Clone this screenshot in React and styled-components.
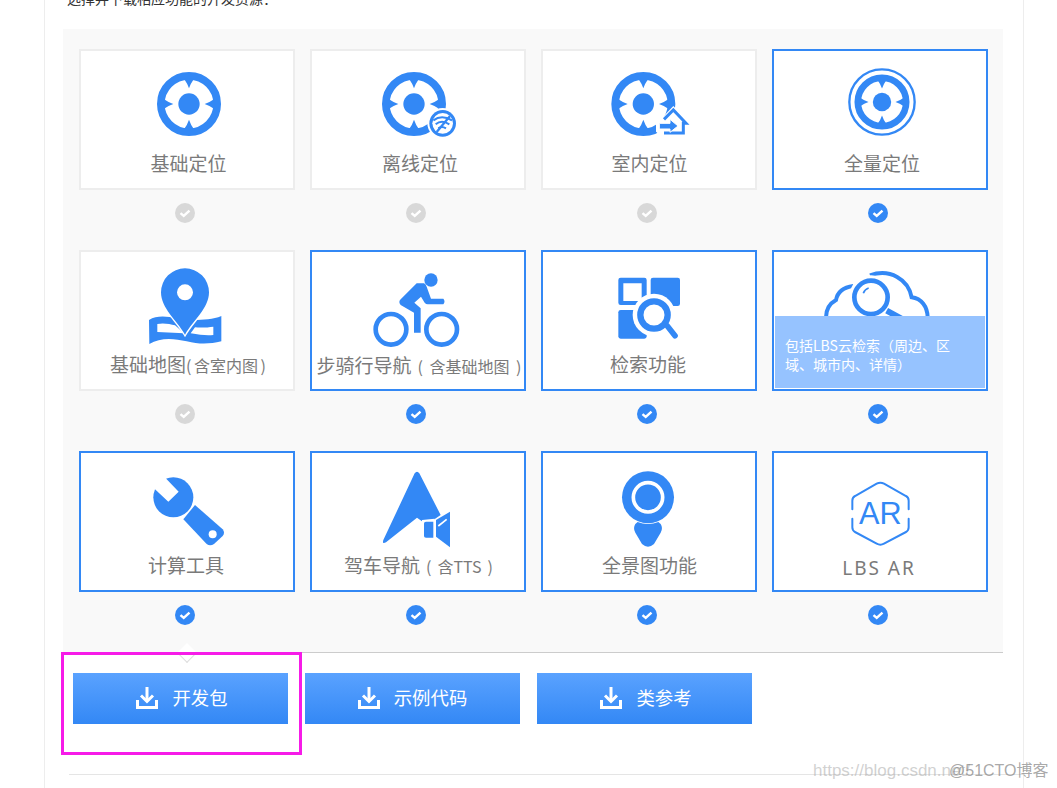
import React from "react";
import styled, { createGlobalStyle } from "styled-components";

const BLUE = "#3388f5";
const CJK = `"Noto Sans CJK SC", "Noto Sans", sans-serif`;

const Global = createGlobalStyle`
  html, body { margin: 0; padding: 0; background: #fff; }
  body { font-family: ${CJK}; overflow: hidden; }
`;

const Shell = styled.div`
  position: relative;
  display: flow-root;
  box-sizing: border-box;
  width: 980px;
  height: 788px;
  margin-left: 44px;
  border-left: 1px solid #ededed;
  border-right: 1px solid #ededed;
`;
const Intro = styled.p`
  margin: -9px 0 0 22px;
  height: 38px;
  font-size: 14px;
  line-height: 14px;
  color: #333;
`;
const Panel = styled.section`
  position: relative;
  box-sizing: border-box;
  width: 940px;
  margin-left: 18px;
  padding: 20px 0 27px 16px;
  background: #f9f9f9;
  border-bottom: 1px solid #ccc;
`;
const Grid = styled.div`
  display: grid;
  grid-template-columns: repeat(4, 216px);
  column-gap: 15px;
  row-gap: 27px;
`;
const Cell = styled.div`
  display: flex;
  flex-direction: column;
  align-items: center;
`;
const Card = styled.div`
  position: relative;
  box-sizing: border-box;
  width: 216px;
  height: 141px;
  background: #fff;
  border: 2px solid ${(p) => (p.$on ? BLUE : "#ededed")};
  overflow: hidden;
`;
const Canvas = styled.svg`
  display: block;
  width: 212px;
  height: 100px;
`;
const Label = styled.div`
  margin-left: ${(p) => (p.$dx || 0) * 2}px;
  padding-top: ${(p) => p.$dy || 0}px;
  height: 24px;
  line-height: 24px;
  font-size: 19px;
  letter-spacing: ${(p) => (p.$wide ? "2px" : "0")};
  font-family: ${(p) => (p.$wide ? `"Noto Sans", sans-serif` : CJK)};
  color: #7a7a7a;
  text-align: center;
  white-space: nowrap;
`;
const Sub = styled.span`
  padding-left: ${(p) => p.$pad || 0}px;
  font-size: 16px;
  word-spacing: ${(p) => p.$gap || 0}px;
`;
const Hint = styled.div`
  position: absolute;
  left: 1px;
  right: 1px;
  bottom: 1px;
  height: 72px;
  box-sizing: border-box;
  padding: 20px 26px 0 10px;
  background: #96c3ff;
  color: #fff;
  font-size: 14px;
  line-height: 19px;
`;
const CheckWrap = styled.span`
  display: block;
  width: 20px;
  height: 20px;
  margin: 13px 4px 0 0;
`;
const Caret = styled.span`
  position: absolute;
  left: 117px;
  bottom: -8px;
  width: 14px;
  height: 14px;
  box-sizing: border-box;
  background: #fff;
  border-right: 1px solid #ddd;
  border-bottom: 1px solid #ddd;
  transform: rotate(45deg);
`;
const Actions = styled.div`
  display: flex;
  gap: 17px;
  margin-top: 20px;
  padding-left: 28px;
`;
const Button = styled.button`
  display: flex;
  align-items: center;
  justify-content: center;
  gap: 14px;
  box-sizing: border-box;
  width: 215px;
  height: 51px;
  padding: 0 0 2px ${(p) => p.$pad || 0}px;
  border: 0;
  background: linear-gradient(#5aa2ff, #3388f5);
  color: #fff;
  font-family: ${CJK};
  font-size: 18.4px;
  cursor: pointer;
`;
const ButtonText = styled.span`
  margin-bottom: 2px;
`;
const Divider = styled.hr`
  height: 1px;
  margin: 50px 0 0 24px;
  border: 0;
  background: #e5e5e5;
`;
const Highlight = styled.div`
  position: absolute;
  left: 16px;
  top: 652px;
  box-sizing: border-box;
  width: 241px;
  height: 103px;
  border: 3px solid #f61be8;
  pointer-events: none;
`;
const Mark = styled.span`
  position: absolute;
  top: ${(p) => p.$top}px;
  left: ${(p) => p.$left}px;
  font-family: "Liberation Sans", ${CJK};
  font-size: ${(p) => p.$size}px;
  line-height: 20px;
  color: ${(p) => p.$color};
  white-space: nowrap;
`;

function Compass({ cx, cy, s = 1 }) {
  const tri = "M-15 -76 Q-5 -62 0 -47 Q5 -62 15 -76 Z";
  return (
    <g transform={`translate(${cx} ${cy}) scale(${s})`}>
      <circle r="84.5" fill="none" stroke={BLUE} strokeWidth="23" />
      <circle r="32" fill={BLUE} />
      {[0, 90, 180, 270].map((a) => (
        <path key={a} d={tri} fill={BLUE} transform={`rotate(${a})`} />
      ))}
    </g>
  );
}

const Icons = {
  base: (
    <Canvas viewBox="63 153 636 300"><Compass cx={387} cy={312} /></Canvas>
  ),
  offline: (
    <Canvas viewBox="756 153 636 300">
      <Compass cx={1062} cy={312} />
      <circle cx="1148" cy="370" r="46" fill="#fff" />
      <circle cx="1148" cy="370" r="40" fill={BLUE} />
      <circle cx="1148" cy="370" r="31" fill="#fff" />
      <g fill="none" stroke={BLUE} strokeWidth="6">
        <path d="M1120 361 Q1145 342 1176 361" />
        <path d="M1127 373 Q1145 358 1168 373" />
        <path d="M1135 385 Q1145 377 1158 385" />
        <path d="M1170 348 L1130 396" strokeWidth="7" />
      </g>
    </Canvas>
  ),
  indoor: (
    <Canvas viewBox="39 63 636 300">
      <Compass cx={340} cy={222} />
      <path d="M430 228 L482 282 L470 320 L395 320 L378 305 L378 270 L395 265 Z" fill="#fff" />
      <path d="M402 268 L430 240 L468 280 L460 280 L460 309 L402 309" fill="none" stroke={BLUE} strokeWidth="9" />
      <path d="M388 280 L420 280 L420 268 L444 288 L420 307 L420 297 L388 297 Z" fill={BLUE} stroke="#fff" strokeWidth="3" />
    </Canvas>
  ),
  full: (
    <Canvas viewBox="732 63 636 300">
      <circle cx="1056" cy="216" r="98" fill="none" stroke={BLUE} strokeWidth="7" />
      <Compass cx={1056} cy={216} s={0.86} />
    </Canvas>
  ),
  map: (
    <Canvas viewBox="63 36 636 300">
      <path d="M267 240 C290 226 320 228 350 236 L400 240 C430 240 460 238 484 228 L484 304 C450 312 420 314 380 304 C340 294 300 292 268 312 Z" fill={BLUE} />
      <path d="M292 252 C310 248 330 252 345 256 L372 280 L292 276 Z" fill="#fff" />
      <path d="M405 262 C425 264 445 262 460 260 L460 285 C440 288 420 284 392 280 Z" fill="#fff" />
      <path d="M375 284 C350 240 303 205 303 157 A72 72 0 0 1 447 157 C447 205 400 240 375 284 Z" fill={BLUE} stroke="#fff" strokeWidth="8" paintOrder="stroke" />
      <circle cx="375" cy="157" r="24" fill="#fff" />
    </Canvas>
  ),
  bike: (
    <Canvas viewBox="756 36 636 300">
      <circle cx="1113" cy="120" r="20" fill={BLUE} />
      <circle cx="993" cy="268" r="46" fill="none" stroke={BLUE} strokeWidth="14" />
      <circle cx="1145" cy="268" r="46" fill="none" stroke={BLUE} strokeWidth="14" />
      <path d="M1070 130 L1092 130 Q1098 132 1100 140 L1113 176 L1150 176 Q1157 184 1150 193 L1103 193 Q1098 193 1094 188 L1083 170 L1063 188 L1082 205 L1082 278 L1062 278 L1062 218 L1022 195 Q1014 186 1022 178 Z" fill={BLUE} />
    </Canvas>
  ),
  search: (
    <Canvas viewBox="39 36 636 300">
      <path fillRule="evenodd" d="M272 113 H343 Q350 113 350 120 V188 Q350 195 343 195 H272 Q265 195 265 188 V120 Q265 113 272 113 Z M280 130 V183 H335 V130 Z" fill={BLUE} />
      <rect x="362" y="113" width="88" height="85" rx="7" fill={BLUE} />
      <rect x="265" y="210" width="85" height="86" rx="7" fill={BLUE} />
      <circle cx="372" cy="225" r="64" fill="#fff" />
      <circle cx="372" cy="225" r="41" fill="none" stroke={BLUE} strokeWidth="19" />
      <path d="M412 258 L435 287" stroke={BLUE} strokeWidth="17" strokeLinecap="round" />
    </Canvas>
  ),
  cloud: (
    <Canvas viewBox="732 36 636 300">
      <g fill="none" stroke={BLUE} strokeWidth="12">
        <path d="M888 232 C888 205 900 190 918 180 C922 158 940 142 970 138" />
        <path d="M1020 106 C1080 85 1135 118 1145 172 C1175 176 1192 200 1193 232" />
      </g>
      <circle cx="1023" cy="172" r="66" fill="#fff" />
      <circle cx="1023" cy="172" r="50" fill="none" stroke={BLUE} strokeWidth="14" />
      <path d="M1070 212 L1125 242" stroke={BLUE} strokeWidth="18" />
      <path d="M1000 160 Q1004 148 1016 144" fill="none" stroke={BLUE} strokeWidth="5" />
    </Canvas>
  ),
  wrench: (
    <Canvas viewBox="63 39 636 300">
      <path d="M405 195 L488 268 Q496 278 488 288 L462 312 Q450 320 440 312 L370 238 Z" fill={BLUE} />
      <circle cx="458" cy="283" r="12" fill="#fff" />
      <circle cx="340" cy="172" r="60" fill={BLUE} stroke="#fff" strokeWidth="5" paintOrder="stroke" />
      <path d="M270 134 L285 148 L325 185 L356 155 L320 118 L308 95 Z" fill="#fff" />
    </Canvas>
  ),
  nav: (
    <Canvas viewBox="756 39 636 300">
      <path d="M1064 100 Q1071 90 1078 100 L1142 225 L1120 240 L1088 245 L1071 233 L978 307 Q966 314 970 300 Z" fill={BLUE} />
      <path d="M1086 240 L1124 236 L1124 296 L1086 296 Z" fill="#fff" />
      <path d="M1092 250 Q1092 245 1098 245 L1120 245 L1120 293 L1098 293 Q1092 293 1092 288 Z" fill={BLUE} />
      <path d="M1128 240 L1170 215 L1170 322 L1128 290 Z" fill={BLUE} />
      <path d="M1135 258 L1160 238" stroke="#fff" strokeWidth="5" />
    </Canvas>
  ),
  pano: (
    <Canvas viewBox="39 39 636 300">
      <path d="M330 240 L378 240 L392 252 Q400 265 392 278 L372 312 Q354 328 336 312 L316 278 Q308 265 316 252 Z" fill={BLUE} />
      <circle cx="354" cy="172" r="78" fill={BLUE} stroke="#fff" strokeWidth="4" paintOrder="stroke" />
      <circle cx="354" cy="172" r="44" fill="none" stroke="#fff" strokeWidth="11" />
    </Canvas>
  ),
  ar: (
    <Canvas viewBox="732 39 636 300">
      <g fill="none" stroke={BLUE} strokeWidth="6" strokeLinecap="round">
        <path d="M967 208 V182 Q967 172 975 168 L1040 131 Q1051 125 1062 131 L1128 168 Q1136 172 1136 182 V208" />
        <path d="M967 236 V262 Q967 272 975 276 L1040 311 Q1051 317 1062 311 L1128 276 Q1136 272 1136 262 V236" />
      </g>
      <text x="1051" y="253" textAnchor="middle" fontFamily="Liberation Sans, sans-serif" fontSize="92" fill={BLUE}>AR</text>
    </Canvas>
  ),
};

function Check({ on }) {
  return (
    <CheckWrap>
      <svg width="20" height="20" viewBox="0 0 20 20">
        <circle cx="10" cy="10" r="10" fill={on ? BLUE : "#d8d8d8"} />
        <path d="M5.5 10.2 L8.7 13 L14.5 7.6" fill="none" stroke="#fff" strokeWidth="2.4" />
      </svg>
    </CheckWrap>
  );
}

function DownloadIcon() {
  return (
    <svg width="22" height="22" viewBox="0 0 22 22" fill="none" stroke="#fff" strokeWidth="3">
      <path d="M11 0 V13" />
      <path d="M5 8.5 L11 14.5 L17 8.5" />
      <path d="M1.5 13 V20.5 H20.5 V13" />
    </svg>
  );
}

const items = [
  { icon: "base", text: "基础定位", on: false, dx: 1.5, dy: 0, check: false },
  { icon: "offline", text: "离线定位", on: false, dx: 2, dy: 0, check: false },
  { icon: "indoor", text: "室内定位", on: false, dx: 0.5, dy: 0, check: false },
  { icon: "full", text: "全量定位", on: true, dx: 2, dy: 0, check: true },
  { icon: "map", text: "基础地图", sub: "( 含室内图 )", gap: -1, on: false, dx: 1, dy: 0, check: false },
  { icon: "bike", text: "步骑行导航", sub: "( 含基础地图 )", gap: 3, pad: 6, on: true, dx: 1, dy: 1, check: true },
  { icon: "search", text: "检索功能", on: true, dx: -1, dy: 0, check: true },
  { icon: "cloud", text: "", on: true, check: true, hint: "包括LBS云检索（周边、区域、城市内、详情）" },
  { icon: "wrench", text: "计算工具", on: true, dx: -1, dy: 0, check: true },
  { icon: "nav", text: "驾车导航", sub: "( 含TTS )", gap: 2.5, pad: 6, on: true, dx: 0.5, dy: 0, check: true },
  { icon: "pano", text: "全景图功能", on: true, dx: 0.5, dy: 0, check: true },
  { icon: "ar", text: "LBS AR", on: true, dx: -1, dy: 3, wide: true, check: true },
];

export default function App() {
  return (
    <Shell>
      <Global />
      <Intro>选择并下载相应功能的开发资源：</Intro>
      <Panel>
        <Grid>
          {items.map((it) => (
            <Cell key={it.icon}>
              <Card $on={it.on}>
                {Icons[it.icon]}
                {it.text && (
                  <Label $dx={it.dx} $dy={it.dy} $wide={it.wide}>
                    {it.text}
                    {it.sub && <Sub $gap={it.gap} $pad={it.pad}>{it.sub}</Sub>}
                  </Label>
                )}
                {it.hint && <Hint>{it.hint}</Hint>}
              </Card>
              <Check on={it.check} />
            </Cell>
          ))}
        </Grid>
        <Caret />
      </Panel>
      <Actions>
        <Button $pad={3}><DownloadIcon /><ButtonText>开发包</ButtonText></Button>
        <Button><DownloadIcon /><ButtonText>示例代码</ButtonText></Button>
        <Button $pad={3}><DownloadIcon /><ButtonText>类参考</ButtonText></Button>
      </Actions>
      <Divider />
      <Highlight />
      <Mark $top={761} $left={768} $size={17} $color="rgba(170,170,170,.55)">https://blog.csdn.net/</Mark>
      <Mark $top={761} $left={904} $size={16} $color="rgba(120,120,120,.65)">@51CTO博客</Mark>
    </Shell>
  );
}
